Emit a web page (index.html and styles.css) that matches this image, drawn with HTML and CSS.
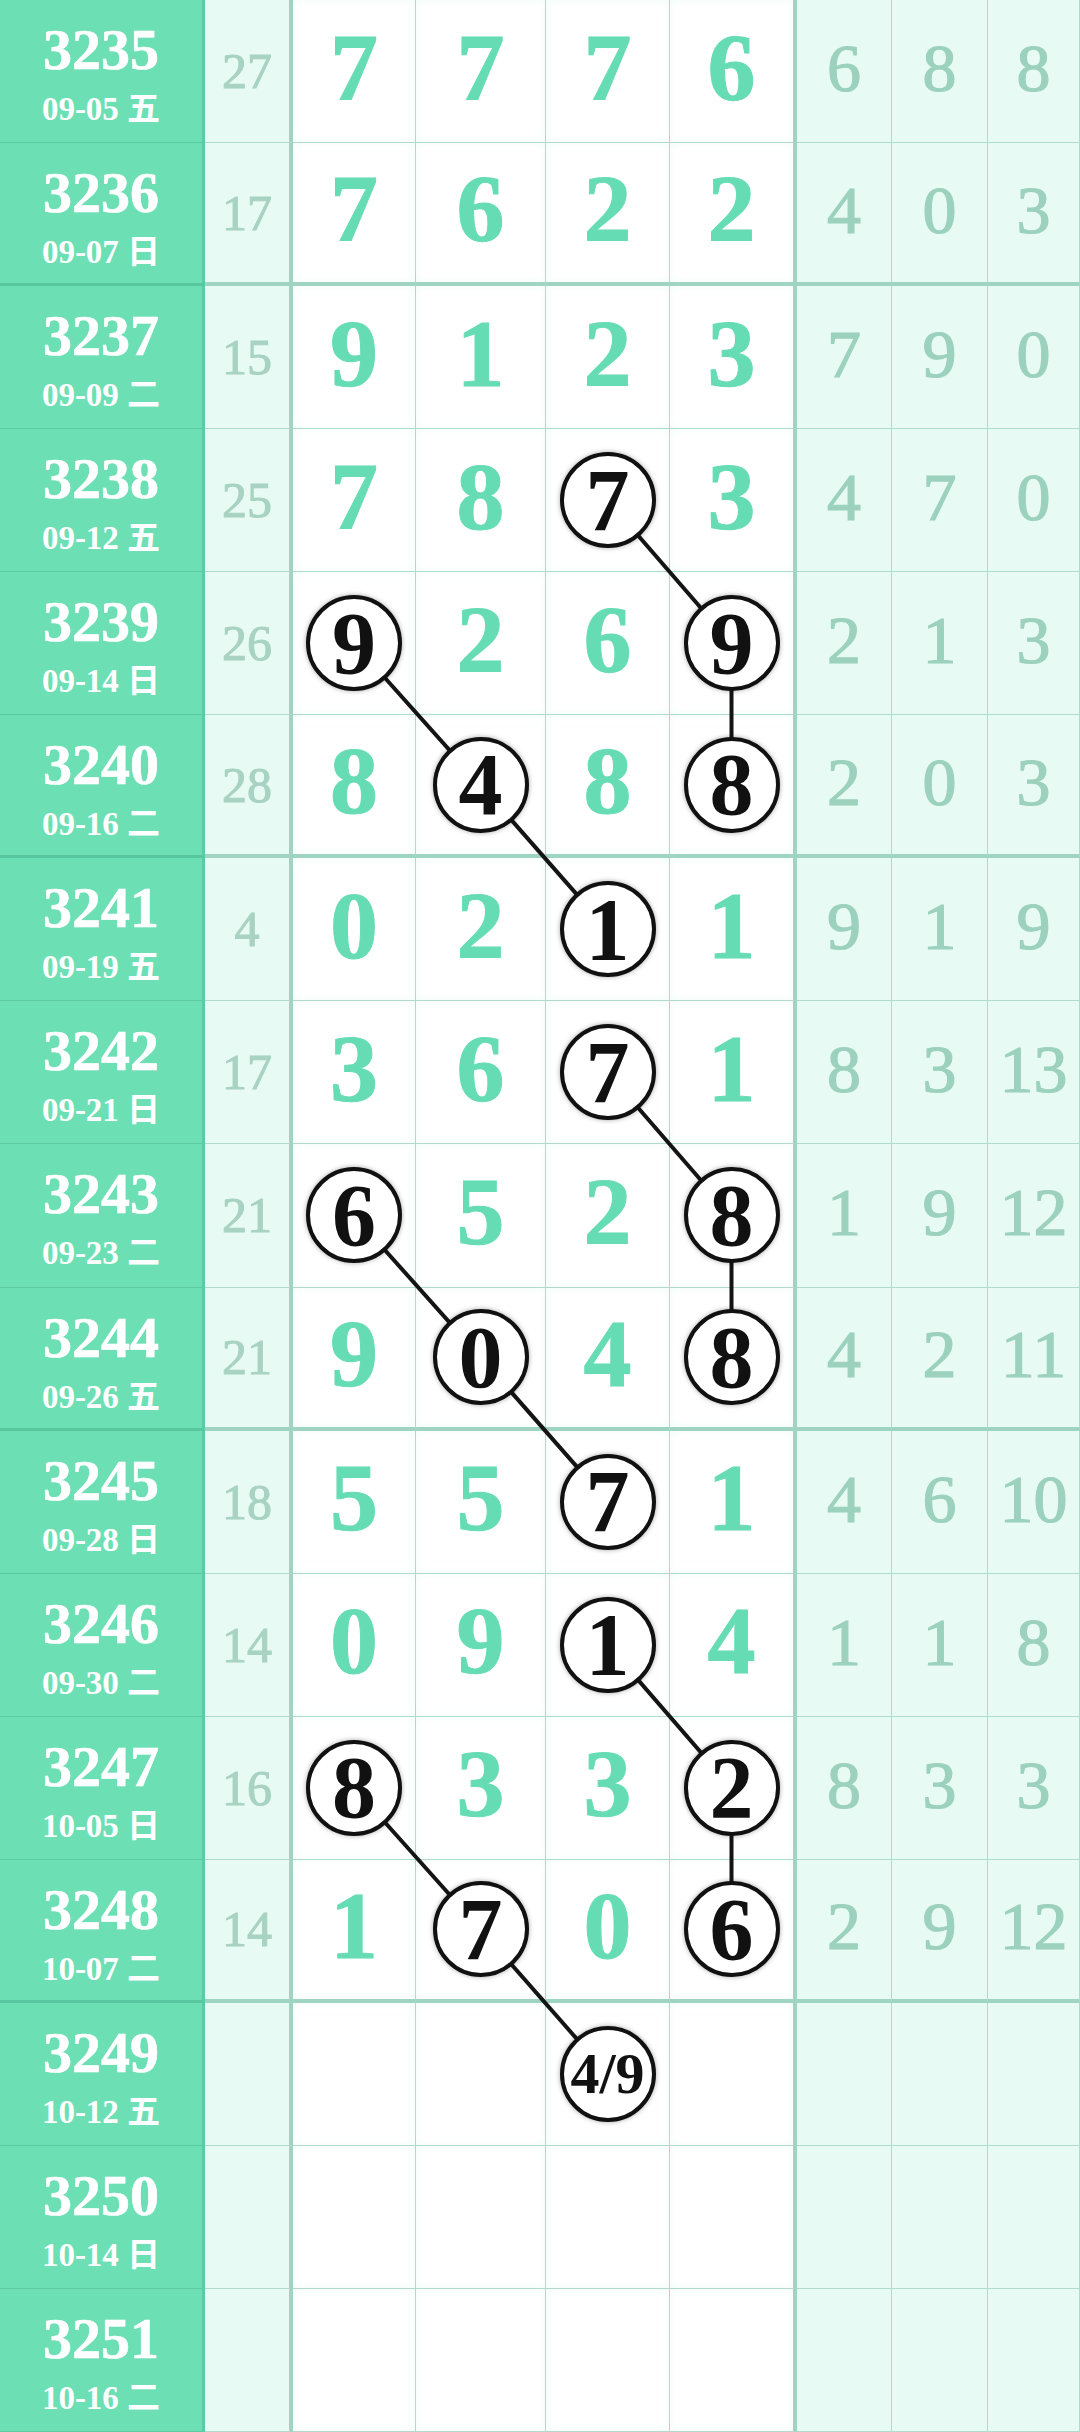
FILE: index.html
```html
<!DOCTYPE html>
<html lang="zh">
<head>
<meta charset="UTF-8" />
<meta name="viewport" content="width=device-width, initial-scale=1.0" />
<title>走势图</title>
<link rel="stylesheet" href="styles.css">
</head>
<body>

<div class="chart" id="chart">
  <svg class="links" id="links" xmlns="http://www.w3.org/2000/svg"></svg>
</div>

<script>
// 期号, 日期, 和值, 开奖号码, 跨度等
const data = [
  ['3235', '09-05 五', 27, [7, 7, 7, 6], [6, 8, 8]],
  ['3236', '09-07 日', 17, [7, 6, 2, 2], [4, 0, 3]],
  ['3237', '09-09 二', 15, [9, 1, 2, 3], [7, 9, 0]],
  ['3238', '09-12 五', 25, [7, 8, 7, 3], [4, 7, 0]],
  ['3239', '09-14 日', 26, [9, 2, 6, 9], [2, 1, 3]],
  ['3240', '09-16 二', 28, [8, 4, 8, 8], [2, 0, 3]],
  ['3241', '09-19 五', 4, [0, 2, 1, 1], [9, 1, 9]],
  ['3242', '09-21 日', 17, [3, 6, 7, 1], [8, 3, 13]],
  ['3243', '09-23 二', 21, [6, 5, 2, 8], [1, 9, 12]],
  ['3244', '09-26 五', 21, [9, 0, 4, 8], [4, 2, 11]],
  ['3245', '09-28 日', 18, [5, 5, 7, 1], [4, 6, 10]],
  ['3246', '09-30 二', 14, [0, 9, 1, 4], [1, 1, 8]],
  ['3247', '10-05 日', 16, [8, 3, 3, 2], [8, 3, 3]],
  ['3248', '10-07 二', 14, [1, 7, 0, 6], [2, 9, 12]],
  ['3249', '10-12 五'],
  ['3250', '10-14 日'],
  ['3251', '10-16 二']
];

// 圈出的号码: 行 -> 列
const marks = {3: [2], 4: [0, 3], 5: [1, 3], 6: [2], 7: [2], 8: [0, 3], 9: [1, 3],
  10: [2], 11: [2], 12: [0, 3], 13: [1, 3]};

// 预测
const guess = {row: 14, col: 2, text: '4/9'};

// 连线
const links = [
  [[3, 2], [4, 3]], [[4, 3], [5, 3]], [[4, 0], [5, 1]], [[5, 1], [6, 2]],
  [[7, 2], [8, 3]], [[8, 3], [9, 3]], [[8, 0], [9, 1]], [[9, 1], [10, 2]],
  [[11, 2], [12, 3]], [[12, 3], [13, 3]], [[12, 0], [13, 1]], [[13, 1], [14, 2]]
];

const chart = document.getElementById('chart');
const svg = document.getElementById('links');

data.forEach((d, r) => {
  const row = document.createElement('div');
  row.className = 'row' + (r % 4 === 1 ? ' sep' : '');

  const issue = document.createElement('div');
  issue.className = 'issue';
  issue.innerHTML = `<span class="no">${d[0]}</span><span class="date">${d[1]}</span>`;
  row.appendChild(issue);

  const sum = document.createElement('div');
  sum.className = 'sum';
  sum.textContent = d[2] !== undefined ? d[2] : '';
  row.appendChild(sum);

  for (let c = 0; c < 4; c++) {
    const cell = document.createElement('div');
    cell.className = 'main' + (c === 3 ? ' last' : '');
    const circled = marks[r] && marks[r].includes(c);
    if (circled) {
      cell.innerHTML = `<span class="ring" data-pos="${r}-${c}">${d[3][c]}</span>`;
    } else if (r === guess.row && c === guess.col) {
      cell.innerHTML = `<span class="ring small" data-pos="${r}-${c}">${guess.text}</span>`;
    } else if (d[3]) {
      cell.innerHTML = `<span class="digit">${d[3][c]}</span>`;
    }
    row.appendChild(cell);
  }

  for (let c = 0; c < 3; c++) {
    const cell = document.createElement('div');
    cell.className = 'side';
    if (d[4]) cell.innerHTML = `<span class="digit">${d[4][c]}</span>`;
    row.appendChild(cell);
  }

  chart.appendChild(row);
});

// 圆心坐标
function center(pos) {
  const el = document.querySelector(`.ring[data-pos="${pos[0]}-${pos[1]}"]`);
  const r = el.getBoundingClientRect();
  const c = chart.getBoundingClientRect();
  return [r.left + r.width / 2 - c.left, r.top + r.height / 2 - c.top];
}

links.forEach(([a, b]) => {
  const p = center(a);
  const q = center(b);
  const line = document.createElementNS('http://www.w3.org/2000/svg', 'line');
  line.setAttribute('x1', p[0]);
  line.setAttribute('y1', p[1]);
  line.setAttribute('x2', q[0]);
  line.setAttribute('y2', q[1]);
  svg.appendChild(line);
});
</script>

</body>
</html>
```

FILE: styles.css
```css
/* Общие стили */
body {
  margin: 0;
  background: #fff;
  font-family: 'Liberation Serif', 'Noto Sans CJK SC', serif;
}

/* Сетка таблицы */
.chart {
  position: relative;
  display: grid;
  grid-template-columns: 205px 88px 123px 130px 124px 127px 95px 96px 1fr;
  grid-template-rows: repeat(17, 1fr);
  height: 2432px;
  overflow: hidden;
}

.row {
  display: contents;
}

.row > div {
  box-sizing: border-box;
  display: flex;
  align-items: center;
  justify-content: center;
  border-bottom: 1px solid #b0dacb;
  border-right: 1px solid #b0dacb;
}

.row.sep > div {
  border-bottom: 4px solid #9fd4c2;
}

/* Линии связи */
.links {
  position: absolute;
  top: 0;
  left: 0;
  width: 100%;
  height: 100%;
  z-index: 1;
  pointer-events: none;
}
.links line {
  stroke: #141414;
  stroke-width: 4;
}

/* Номер тиража */
.row > .issue {
  flex-direction: column;
  justify-content: flex-start;
  padding-top: 20px;
  background: #6ddfb5;
  color: #fff;
  font-weight: bold;
  border-right: 3px solid #5ccba3;
  border-bottom: 1px solid #5ccba3;
}
.row.sep > .issue {
  border-bottom: 3px solid #58c69e;
}
.issue .no {
  font-size: 58px;
  line-height: 60px;
  -webkit-text-stroke: 0.6px #fff;
}
.issue .date {
  margin-top: 12px;
  font-size: 33px;
  line-height: 34px;
}

/* Сумма */
.row > .sum {
  background: #e7fbf4;
  color: #a8d2c2;
  font-size: 50px;
  border-right: 4px solid #9fd4c2;
  -webkit-text-stroke: 1px #a8d2c2;
}

/* Основные цифры */
.row > .main {
  background: #fff;
  box-shadow: inset 0 0 8px #effcf7;
  color: #66dcb4;
  font-size: 96px;
  font-weight: bold;
}
.row > .main.last {
  border-right: 4px solid #9fd4c2;
}
.main .digit {
  margin-bottom: 8px;
  -webkit-text-stroke: 1px #66dcb4;
}

/* Кружки */
.ring {
  position: relative;
  z-index: 2;
  box-sizing: border-box;
  width: 96px;
  height: 96px;
  display: flex;
  align-items: center;
  justify-content: center;
  border: 4.5px solid #111;
  border-radius: 50%;
  background: #fff;
  color: #111;
  font-size: 88px;
  font-weight: bold;
  box-shadow: 0 0 5px rgba(0, 0, 0, 0.35);
}
.ring.small {
  font-size: 58px;
}

/* Правые колонки */
.row > .side {
  background: #e7fbf4;
  color: #9cd1be;
  font-size: 68px;
}
.side .digit {
  margin-bottom: 5px;
  -webkit-text-stroke: 1.2px #9cd1be;
}
```
